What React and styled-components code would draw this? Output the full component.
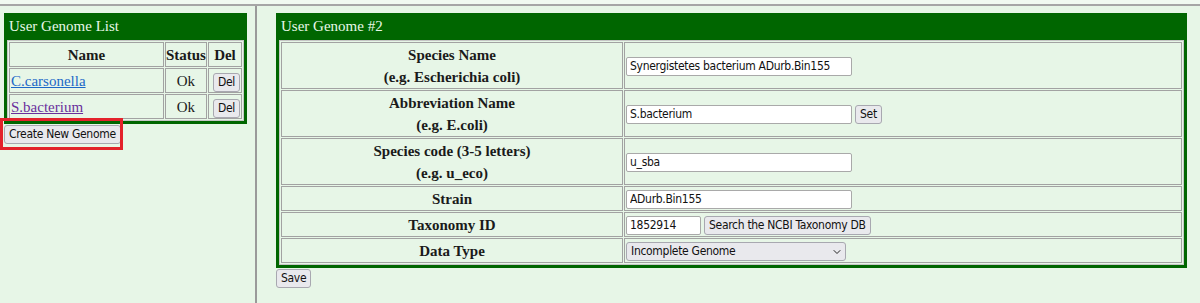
import React from "react";
import styled, { createGlobalStyle } from "styled-components";
import { ChevronDown } from "lucide-react";

const genomes = [
  { name: "C.carsonella", status: "Ok", visited: false },
  { name: "S.bacterium", status: "Ok", visited: true },
];

const App = () => {
  return (
    <Page>
      <GlobalStyle />
      <TopFrame />
      <Frames>
        <LeftFrame>
          <GreenBox width={243}>
            <Title>User Genome List</Title>
            <Table>
              <tbody>
                <tr>
                  <Head>Name</Head>
                  <Head fit>Status</Head>
                  <Head fit>Del</Head>
                </tr>
                {genomes.map((g) => (
                  <tr key={g.name}>
                    <Cell align="left">
                      <GenomeLink href="#" visited={g.visited ? 1 : 0}>
                        {g.name}
                      </GenomeLink>
                    </Cell>
                    <Cell>{g.status}</Cell>
                    <Cell>
                      <Button>Del</Button>
                    </Cell>
                  </tr>
                ))}
              </tbody>
            </Table>
          </GreenBox>
          <Actions>
            <Button>Create New Genome</Button>
          </Actions>
          <Highlight />
        </LeftFrame>

        <RightFrame>
          <GreenBox width={911}>
            <Title>User Genome #2</Title>
            <Table>
              <tbody>
                <tr>
                  <Label>
                    Species Name
                    <br />
                    (e.g. Escherichia coli)
                  </Label>
                  <Value>
                    <Input defaultValue="Synergistetes bacterium ADurb.Bin155" />
                  </Value>
                </tr>
                <tr>
                  <Label>
                    Abbreviation Name
                    <br />
                    (e.g. E.coli)
                  </Label>
                  <Value>
                    <Input defaultValue="S.bacterium" />
                    <Button>Set</Button>
                  </Value>
                </tr>
                <tr>
                  <Label>
                    Species code (3-5 letters)
                    <br />
                    (e.g. u_eco)
                  </Label>
                  <Value>
                    <Input defaultValue="u_sba" />
                  </Value>
                </tr>
                <tr>
                  <Label>Strain</Label>
                  <Value>
                    <Input defaultValue="ADurb.Bin155" />
                  </Value>
                </tr>
                <tr>
                  <Label>Taxonomy ID</Label>
                  <Value>
                    <Input defaultValue="1852914" size="short" />
                    <Button>Search the NCBI Taxonomy DB</Button>
                  </Value>
                </tr>
                <tr>
                  <Label>Data Type</Label>
                  <Value>
                    <SelectWrap>
                      <Select defaultValue="incomplete">
                        <option value="complete">Complete Genome</option>
                        <option value="incomplete">Incomplete Genome</option>
                      </Select>
                      <Chevron>
                        <ChevronDown size={12} strokeWidth={2} />
                      </Chevron>
                    </SelectWrap>
                  </Value>
                </tr>
              </tbody>
            </Table>
          </GreenBox>
          <Actions>
            <Button>Save</Button>
          </Actions>
        </RightFrame>
      </Frames>
    </Page>
  );
};

export default App;

const GlobalStyle = createGlobalStyle`
  html, body {
    margin: 0;
    padding: 0;
    background: #e7f6e7;
  }
  body {
    font-family: "Liberation Serif", serif;
    color: #1a1a1a;
  }
`;

const Page = styled.div`
  width: 1200px;
  height: 303px;
  overflow: hidden;
  display: flex;
  flex-direction: column;
`;

const TopFrame = styled.div`
  height: 4px;
  background: #f1faf1;
  border-bottom: 2px solid #a6a6a6;
`;

const Frames = styled.div`
  flex: 1;
  display: flex;
`;

const LeftFrame = styled.div`
  position: relative;
  width: 257px;
  flex: none;
  box-sizing: border-box;
  border-right: 2px solid #9a9a9a;
  padding: 7px 0 0 4px;
`;

const RightFrame = styled.div`
  flex: 1;
  padding: 7px 0 0 19px;
`;

const GreenBox = styled.div`
  width: ${(p) => p.width}px;
  box-sizing: border-box;
  background: #006600;
  padding: 0 3px 3px;
`;

const Title = styled.div`
  color: #e8f8e8;
  font-size: 15px;
  line-height: 27px;
  padding-left: 2px;
`;

const Table = styled.table`
  width: 100%;
  border-collapse: separate;
  border-spacing: 1px;
  background: #e7f6e7;
  border: 1px solid #c6c6c6;
`;

const Cell = styled.td`
  border: 1px solid #a2a2a2;
  padding: 1px 1px 0;
  font-size: 15px;
  line-height: 22px;
  text-align: ${(p) => p.align || "center"};
  vertical-align: middle;
  white-space: nowrap;
`;

const Head = styled(Cell).attrs({ as: "th" })`
  font-weight: bold;
  padding: 1px 0 0;
  width: ${(p) => (p.fit ? "1px" : "auto")};
`;

const Label = styled(Cell).attrs({ as: "th" })`
  width: 338px;
  font-weight: bold;
`;

const Value = styled(Cell)`
  text-align: left;
  padding: 1px 1px 0 1px;
  font-size: 0;
`;

const GenomeLink = styled.a`
  color: ${(p) => (p.visited ? "#6a2f9c" : "#1c68c8")};
  text-decoration: underline;
`;

const controlFont = `
  font-family: "DejaVu Sans Condensed", "DejaVu Sans", sans-serif;
  font-stretch: condensed;
  font-size: 12px;
  letter-spacing: -0.3px;
  color: #111;
`;

const Button = styled.button`
  ${controlFont}
  height: 19px;
  padding: 0 4px;
  margin: 0 0 0 3px;
  background: #e9e9ed;
  border: 1px solid #a8a8b0;
  border-radius: 3px;
  vertical-align: middle;
  line-height: 17px;

  td:first-child &,
  div > &:first-child {
    margin-left: 0;
  }
`;

const Input = styled.input`
  ${controlFont}
  width: ${(p) => (p.size === "short" ? 75 : 226)}px;
  height: 19px;
  box-sizing: border-box;
  padding: 0 3px;
  margin: 0;
  background: #fff;
  border: 1px solid #a9a9a9;
  border-radius: 2px;
  vertical-align: middle;
`;

const SelectWrap = styled.span`
  position: relative;
  display: inline-block;
  vertical-align: middle;
`;

const Select = styled.select`
  ${controlFont}
  width: 220px;
  height: 19px;
  box-sizing: border-box;
  appearance: none;
  padding: 0 4px;
  margin: 0;
  background: #e9e9ed;
  border: 1px solid #a8a8b0;
  border-radius: 3px;
  display: block;
`;

const Chevron = styled.span`
  position: absolute;
  right: 3px;
  top: 4px;
  display: flex;
  color: #222;
  pointer-events: none;
`;

const Actions = styled.div`
  margin-top: 1px;
  font-size: 0;
`;

const Highlight = styled.div`
  position: absolute;
  left: 0;
  top: 112px;
  width: 123px;
  height: 32px;
  box-sizing: border-box;
  border: 3px solid #e3222b;
  pointer-events: none;
`;
